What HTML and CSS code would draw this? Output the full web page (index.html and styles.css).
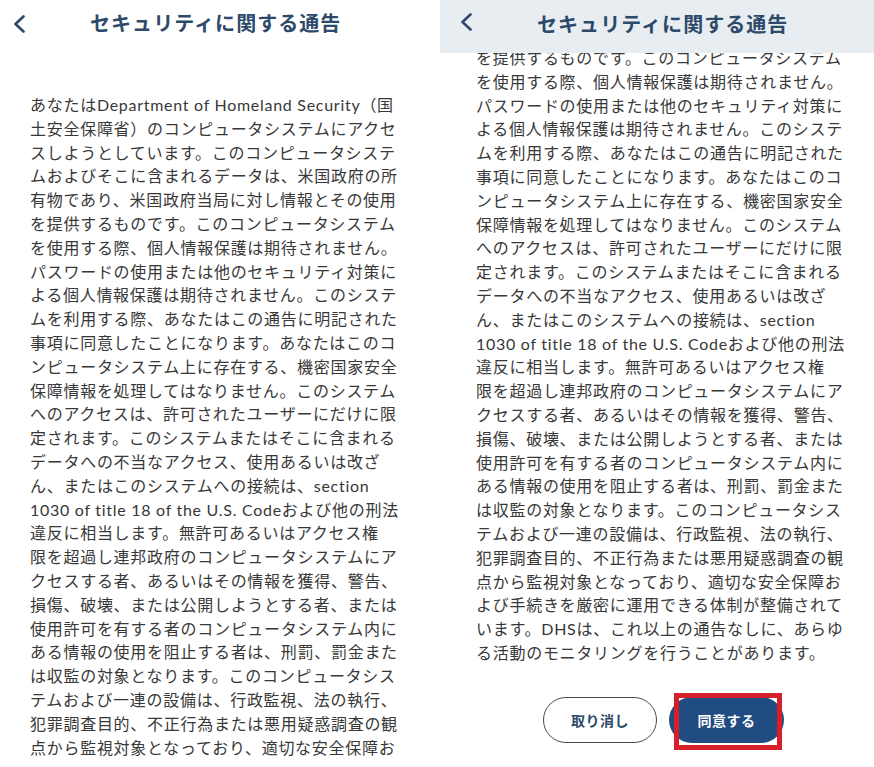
FILE: index.html
```html
<!DOCTYPE html>
<html lang="ja">
<head>
    <meta charset="UTF-8">
    <meta name="viewport" content="width=device-width, initial-scale=1.0">
    <title>セキュリティに関する通告</title>
    <link rel="stylesheet" href="styles.css">
</head>
<body>
    <div class="screens">
        <!-- First screen: top of the notice -->
        <section class="screen">
            <header class="bar">
                <button class="back" aria-label="戻る">
                    <svg width="12" height="18" viewBox="0 0 12 18"><polyline points="10.5,1.5 2.5,9 10.5,16.5" fill="none" stroke="currentColor" stroke-width="2.6" stroke-linecap="round" stroke-linejoin="round"/></svg>
                </button>
                <h1 class="title">セキュリティに関する通告</h1>
            </header>
            <div class="notice notice-top">
                <p>
                    あなたはDepartment of Homeland Security（国<br>
                    土安全保障省）のコンピュータシステムにアクセ<br>
                    スしようとしています。このコンピュータシステ<br>
                    ムおよびそこに含まれるデータは、米国政府の所<br>
                    有物であり、米国政府当局に対し情報とその使用<br>
                    を提供するものです。このコンピュータシステム<br>
                    を使用する際、個人情報保護は期待されません。<br>
                    パスワードの使用または他のセキュリティ対策に<br>
                    よる個人情報保護は期待されません。このシステ<br>
                    ムを利用する際、あなたはこの通告に明記された<br>
                    事項に同意したことになります。あなたはこのコ<br>
                    ンピュータシステム上に存在する、機密国家安全<br>
                    保障情報を処理してはなりません。このシステム<br>
                    へのアクセスは、許可されたユーザーにだけに限<br>
                    定されます。このシステムまたはそこに含まれる<br>
                    データへの不当なアクセス、使用あるいは改ざ<br>
                    ん、またはこのシステムへの接続は、section<br>
                    1030 of title 18 of the U.S. Codeおよび他の刑法<br>
                    違反に相当します。無許可あるいはアクセス権<br>
                    限を超過し連邦政府のコンピュータシステムにア<br>
                    クセスする者、あるいはその情報を獲得、警告、<br>
                    損傷、破壊、または公開しようとする者、または<br>
                    使用許可を有する者のコンピュータシステム内に<br>
                    ある情報の使用を阻止する者は、刑罰、罰金また<br>
                    は収監の対象となります。このコンピュータシス<br>
                    テムおよび一連の設備は、行政監視、法の執行、<br>
                    犯罪調査目的、不正行為または悪用疑惑調査の観<br>
                    点から監視対象となっており、適切な安全保障お
                </p>
            </div>
        </section>

        <!-- Second screen: scrolled to the end, with the action buttons -->
        <section class="screen screen-end">
            <header class="bar bar-shaded">
                <button class="back" aria-label="戻る">
                    <svg width="12" height="18" viewBox="0 0 12 18"><polyline points="10.5,1.5 2.5,9 10.5,16.5" fill="none" stroke="currentColor" stroke-width="2.6" stroke-linecap="round" stroke-linejoin="round"/></svg>
                </button>
                <h1 class="title">セキュリティに関する通告</h1>
            </header>
            <div class="notice notice-end">
                <p>
                    を提供するものです。このコンピュータシステム<br>
                    を使用する際、個人情報保護は期待されません。<br>
                    パスワードの使用または他のセキュリティ対策に<br>
                    よる個人情報保護は期待されません。このシステ<br>
                    ムを利用する際、あなたはこの通告に明記された<br>
                    事項に同意したことになります。あなたはこのコ<br>
                    ンピュータシステム上に存在する、機密国家安全<br>
                    保障情報を処理してはなりません。このシステム<br>
                    へのアクセスは、許可されたユーザーにだけに限<br>
                    定されます。このシステムまたはそこに含まれる<br>
                    データへの不当なアクセス、使用あるいは改ざ<br>
                    ん、またはこのシステムへの接続は、section<br>
                    1030 of title 18 of the U.S. Codeおよび他の刑法<br>
                    違反に相当します。無許可あるいはアクセス権<br>
                    限を超過し連邦政府のコンピュータシステムにア<br>
                    クセスする者、あるいはその情報を獲得、警告、<br>
                    損傷、破壊、または公開しようとする者、または<br>
                    使用許可を有する者のコンピュータシステム内に<br>
                    ある情報の使用を阻止する者は、刑罰、罰金また<br>
                    は収監の対象となります。このコンピュータシス<br>
                    テムおよび一連の設備は、行政監視、法の執行、<br>
                    犯罪調査目的、不正行為または悪用疑惑調査の観<br>
                    点から監視対象となっており、適切な安全保障お<br>
                    よび手続きを厳密に運用できる体制が整備されて<br>
                    います。DHSは、これ以上の通告なしに、あらゆ<br>
                    る活動のモニタリングを行うことがあります。
                </p>
            </div>
            <div class="actions">
                <button class="btn btn-cancel">取り消し</button>
                <span class="highlight">
                    <button class="btn btn-agree">同意する</button>
                </span>
            </div>
        </section>
    </div>
</body>
</html>
```

FILE: styles.css
```css
:root {
    --color-navy: #2d4a6a;      /* header title + back arrow */
    --color-button: #204c82;    /* primary button */
    --color-text: #383838;
    --color-bar: #e8edf2;       /* shaded header */
    --color-mark: #d71f2b;      /* red annotation frame */
}

body {
    margin: 0;
    padding: 0;
    background: #ffffff;
    color: var(--color-text);
    font-family: Lato, "Noto Sans CJK JP", sans-serif;
    overflow: hidden;
}

.screens {
    display: flex;
    height: 767px;
}

.screen {
    width: 440px;
    display: flex;
    flex-direction: column;
    overflow: hidden;
}

.screen-end {
    width: 434px;
}

/* Header bar */
.bar {
    display: flex;
    align-items: center;
    gap: 65px;
    height: 44px;
    padding-left: 13px;
    background: #ffffff;
}

.bar-shaded {
    position: relative;
    z-index: 1;
    height: 53px;
    padding-left: 20px;
    background: var(--color-bar);
    align-items: flex-start;
}

.bar-shaded .back {
    margin-top: 13px;
}

.bar-shaded .title {
    margin-top: 9px;
}

.back {
    display: flex;
    padding: 0;
    border: none;
    background: none;
    color: var(--color-navy);
    margin-top: 4px;
}

.title {
    margin: 0;
    font-size: 20px;
    font-weight: 700;
    letter-spacing: 1.05px;
    color: var(--color-navy);
}

/* Notice text */
.notice p {
    margin: 0;
    font-size: 16px;
    line-height: 23.8px;
    letter-spacing: 0.72px;
    white-space: nowrap;
}

.notice-top {
    padding: 49px 0 0 30px;
}

.notice-end {
    margin-top: -7px;
    padding-left: 36px;
}

/* Buttons */
.actions {
    display: flex;
    align-items: center;
    gap: 12px;
    padding: 32px 0 0 103px;
}

.btn {
    height: 46px;
    border-radius: 23px;
    font-family: Lato, "Noto Sans CJK JP", sans-serif;
    font-weight: 700;
    font-size: 14px;
    letter-spacing: 0.5px;
}

.btn-cancel {
    width: 114px;
    background: #ffffff;
    border: 1.5px solid #4a4a4a;
    color: var(--color-navy);
}

.btn-agree {
    width: 115px;
    background: var(--color-button);
    border: none;
    color: #ffffff;
}

.highlight {
    position: relative;
    display: flex;
}

.highlight::after {
    content: "";
    position: absolute;
    top: -4px;
    right: 2px;
    bottom: -7px;
    left: 5px;
    border: 5px solid var(--color-mark);
}
```
